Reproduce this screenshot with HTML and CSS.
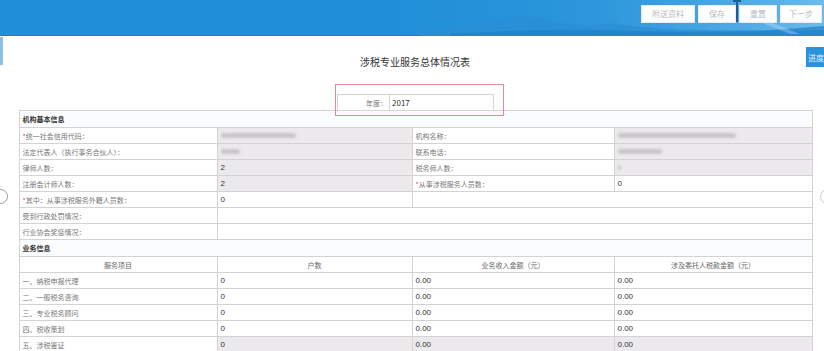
FILE: index.html
```html
<!DOCTYPE html>
<html lang="zh">
<head>
<meta charset="utf-8">
<title>涉税专业服务总体情况表</title>
<link rel="stylesheet" href="styles.css">
</head>
<body>
<header class="topbar">
  <svg class="hills" viewBox="0 0 824 36" preserveAspectRatio="none" aria-hidden="true">
    <defs>
      <linearGradient id="sky" x1="0" x2="1" y1="0" y2="0">
        <stop offset="0" stop-color="#2290d8" stop-opacity="0"/>
        <stop offset="0.5" stop-color="#3a9fe0" stop-opacity="0.5"/>
        <stop offset="1" stop-color="#6cbbec" stop-opacity="1"/>
      </linearGradient>
    </defs>
    <rect x="380" y="0" width="444" height="36" fill="url(#sky)"/>
    <path d="M420 32 C470 26 500 18 525 17 C545 17 560 24 585 26 C600 24 610 22 625 25 C660 30 700 31 824 30 L824 36 L420 36 Z" fill="#2a8fd4" opacity="0.8"/>
    <path d="M450 34 C520 30 560 29 600 30 C640 31 700 33 760 31 L824 26 L824 36 L450 36 Z" fill="#1f82c8" opacity="0.7"/>
    <path d="M760 22 L790 34 L800 34 L770 22 Z" fill="#ffffff" opacity="0.25"/>
  </svg>
  <span class="rope"></span>
  <nav class="actions">
    <button class="btn">附送资料</button>
    <button class="btn">保存</button>
    <button class="btn">重置</button>
    <button class="btn">下一步</button>
  </nav>
</header>
<span class="edge"></span>
<button class="progress">进度</button>
<span class="ring ring-left"></span>
<span class="ring ring-right"></span>
<main class="page">
  <h1 class="title">涉税专业服务总体情况表</h1>
  <div class="year">
    <table class="year-table">
      <tr><td class="year-label">年度：</td><td class="year-value">2017</td></tr>
    </table>
  </div>
  <table class="form">
    <colgroup><col class="c1"><col class="c2"><col class="c3"><col class="c4"></colgroup>
    <tr class="section"><td colspan="4">机构基本信息</td></tr>
    <tr>
      <td class="lbl"><i>*</i>统一社会信用代码：</td>
      <td class="val off"><span class="blur b1"></span></td>
      <td class="lbl">机构名称：</td>
      <td class="val off"><span class="blur b3"></span></td>
    </tr>
    <tr>
      <td class="lbl">法定代表人（执行事务合伙人）：</td>
      <td class="val off"><span class="blur b2"></span></td>
      <td class="lbl">联系电话：</td>
      <td class="val off"><span class="blur b4"></span></td>
    </tr>
    <tr>
      <td class="lbl">律师人数：</td>
      <td class="val off">2</td>
      <td class="lbl">税务师人数：</td>
      <td class="val off"><span class="blur b5"></span></td>
    </tr>
    <tr>
      <td class="lbl">注册会计师人数：</td>
      <td class="val off">2</td>
      <td class="lbl"><i>*</i>从事涉税服务人员数：</td>
      <td class="val">0</td>
    </tr>
    <tr>
      <td class="lbl"><i>*</i>其中：从事涉税服务外籍人员数：</td>
      <td class="val">0</td>
      <td class="val" colspan="2"></td>
    </tr>
    <tr>
      <td class="lbl">受到行政处罚情况：</td>
      <td class="val" colspan="3"></td>
    </tr>
    <tr>
      <td class="lbl">行业协会奖惩情况：</td>
      <td class="val" colspan="3"></td>
    </tr>
    <tr class="section"><td colspan="4">业务信息</td></tr>
    <tr class="head">
      <td>服务项目</td><td>户数</td><td>业务收入金额（元）</td><td>涉及委托人税款金额（元）</td>
    </tr>
    <tr><td class="lbl">一、纳税申报代理</td><td class="val">0</td><td class="val">0.00</td><td class="val">0.00</td></tr>
    <tr><td class="lbl">二、一般税务咨询</td><td class="val">0</td><td class="val">0.00</td><td class="val">0.00</td></tr>
    <tr><td class="lbl">三、专业税务顾问</td><td class="val">0</td><td class="val">0.00</td><td class="val">0.00</td></tr>
    <tr><td class="lbl">四、税收策划</td><td class="val">0</td><td class="val">0.00</td><td class="val">0.00</td></tr>
    <tr><td class="lbl">五、涉税鉴证</td><td class="val off">0</td><td class="val off">0.00</td><td class="val off">0.00</td></tr>
  </table>
</main>
</body>
</html>
```

FILE: styles.css
```css
* { box-sizing: border-box; }
html, body { margin: 0; padding: 0; }
body {
  width: 824px;
  height: 351px;
  overflow: hidden;
  background: #ffffff;
  font-family: "Noto Sans CJK SC", "Noto Sans", sans-serif;
  color: #666;
  position: relative;
}
.topbar {
  position: relative;
  height: 36px;
  background: #2290d8;
  border-bottom: 1px solid #1d80c4;
  display: flex;
  justify-content: flex-end;
  align-items: flex-start;
  padding: 5px 2px 0 0;
}
.hills {
  position: absolute;
  left: 0; top: 0;
  width: 824px; height: 36px;
}
.rope {
  position: absolute;
  left: 736px; top: 0;
  width: 2px; height: 22px;
  background: #1b5f95;
}
.rope::before {
  content: "";
  position: absolute;
  left: -3px; top: 0;
  width: 8px; height: 2px;
  background: #1b5f95;
}
.actions {
  position: relative;
  display: flex;
  gap: 3px;
}
.btn {
  height: 18px;
  padding: 0;
  border: 1px solid #e6eef5;
  background: #ffffff;
  color: #b9bcc0;
  font-family: inherit;
  font-size: 8px;
  line-height: 16px;
  width: 38px;
}
.actions .btn:first-child { width: 54px; }
.actions .btn:last-child { width: 42px; }
.edge {
  position: absolute;
  left: 0; top: 37px;
  width: 3px; height: 28px;
  background: #8cc0e4;
}
.progress {
  position: absolute;
  left: 806px; top: 47px;
  width: 22px; height: 20px;
  border: 0;
  padding: 0 0 0 2px;
  background: #2a93dc;
  color: #e8f3fc;
  font-family: inherit;
  font-size: 8px;
  text-align: left;
}
.ring {
  position: absolute;
  width: 15px; height: 15px;
  border: 1px solid #9a9a9a;
  border-radius: 50%;
  top: 189px;
}
.ring-left { left: -7px; }
.ring-right { left: 820px; border-color: #c9c9c9; }
.page {
  display: flex;
  flex-direction: column;
  align-items: center;
}
.title {
  margin: 18px 0 0;
  height: 40px;
  font-size: 10px;
  font-weight: normal;
  color: #333;
  line-height: 16px;
  padding-left: 6px;
}
.year {
  position: relative;
  z-index: 2;
  width: 160px;
  height: 16px;
  margin-left: 10px;
}
.year::before {
  content: "";
  position: absolute;
  left: -2px; top: -10px;
  width: 167px; height: 30px;
  border: 1px solid #e08c90;
  pointer-events: none;
}
.year-table {
  border-collapse: collapse;
  width: 157px;
  height: 16px;
  font-size: 7px;
}
.year-table td {
  border: 1px solid #d4d4d4;
  padding: 0 2px;
  height: 16px;
}
.year-label { width: 52px; text-align: right; color: #777; }
.year-value { color: #333; font-size: 8px; }
.form {
  position: relative;
  z-index: 1;
  border-collapse: collapse;
  table-layout: fixed;
  width: 793px;
  margin-left: 7px;
  font-size: 7px;
}
.form col.c1 { width: 198px; }
.form col.c2 { width: 195px; }
.form col.c3 { width: 202px; }
.form col.c4 { width: 198px; }
.form td {
  border: 1px solid #d3d3d3;
  height: 16px;
  padding: 0 3px;
  white-space: nowrap;
  overflow: hidden;
  line-height: 14px;
}
.form tr.section td {
  height: 17px;
  color: #333;
  font-weight: bold;
  background: #fbfcfe;
}
.form tr.head td {
  text-align: center;
  color: #666;
}
.form .lbl { color: #777; }
.form .lbl i { color: #e04848; font-style: normal; }
.form .val { color: #333; font-size: 8px; font-family: "Liberation Sans", Arial, sans-serif; }
.form .off { background: #ece9ec; }
.blur {
  display: inline-block;
  height: 5px;
  border-radius: 3px;
  background: #c9c6ca;
  filter: blur(1.2px);
  vertical-align: middle;
}
.b1 { width: 75px; }
.b2 { width: 19px; }
.b3 { width: 118px; }
.b4 { width: 44px; }
.b5 { width: 3px; }
```
